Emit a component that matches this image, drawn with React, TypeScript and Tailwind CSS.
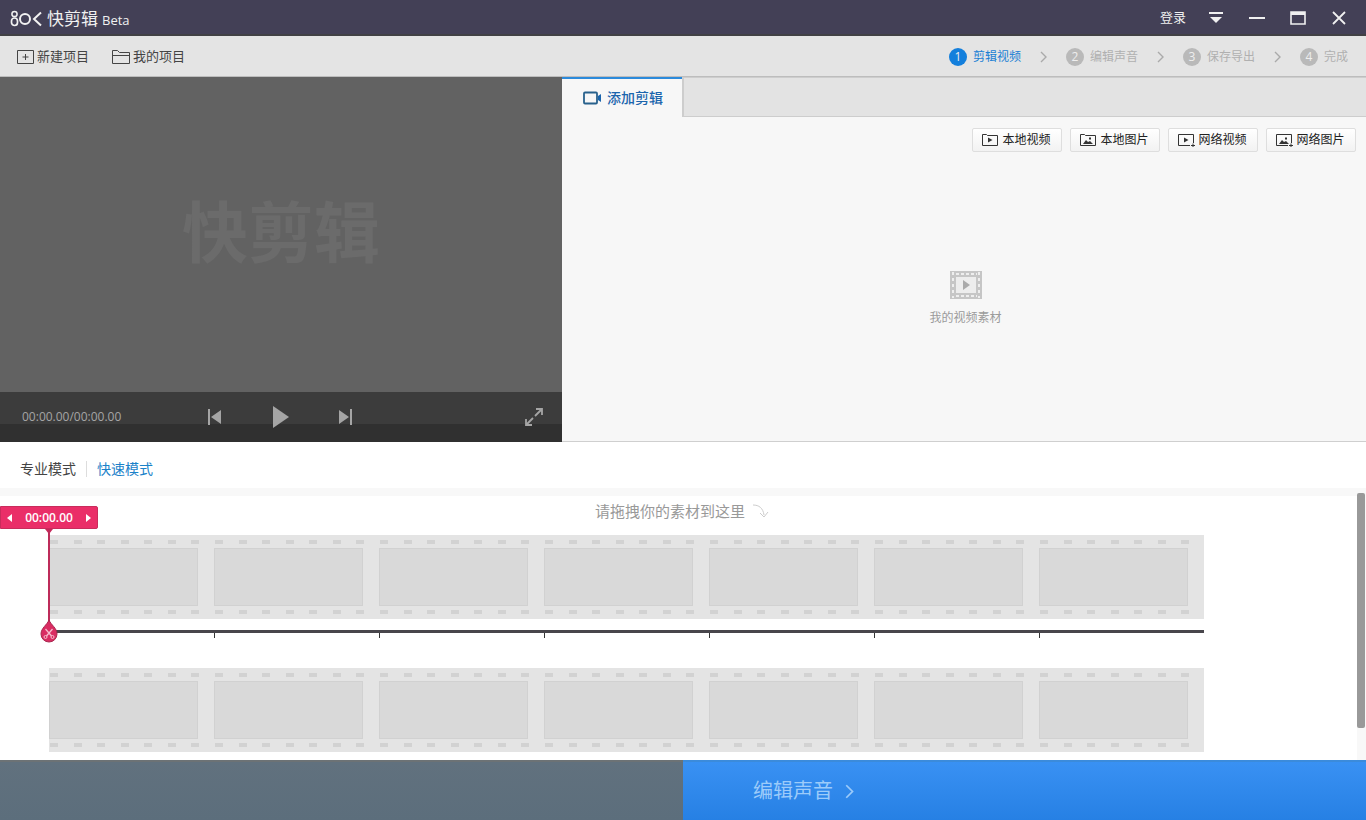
import { useState, type ReactNode } from 'react'
import clsx from 'clsx'

const steps = ['剪辑视频', '编辑声音', '保存导出', '完成']
const frames = [0, 1, 2, 3, 4, 5, 6]

const sources = [
    { label: '本地视频', folder: true, video: true },
    { label: '本地图片', folder: true, video: false },
    { label: '网络视频', folder: false, video: true },
    { label: '网络图片', folder: false, video: false },
]

function Logo() {
    return (
        <svg className="w-8 h-[18px]" viewBox="0 0 32 18" fill="none" stroke="#f2f2f2" strokeWidth="2">
            <circle cx="4.5" cy="4" r="2.6" strokeWidth="1.5" />
            <rect x="1.5" y="8" width="6" height="7.5" rx="3" strokeWidth="1.7" />
            <circle cx="15" cy="9" r="5" />
            <path d="M31 2.5L24 9l7 6.5" />
        </svg>
    )
}

function Chevron({ className }: { className: string }) {
    return (
        <svg className={className} viewBox="0 0 8 12" fill="none" stroke="currentColor" strokeWidth="1.4">
            <path d="M1 1l5 5-5 5" />
        </svg>
    )
}

function SourceIcon({ folder, video }: { folder: boolean; video: boolean }) {
    return (
        <svg className="w-[18px] h-[14px]" viewBox="0 0 18 14" fill="none" stroke="#333">
            {folder ? (
                <path d="M1.5 12.5v-11h4l1 1h10v10z" />
            ) : (
                <path d="M13 12.5H1.5v-11h15V10M14 12.5h4M16 10.5v4" />
            )}
            {video ? (
                <path d="M7 4.5L11.5 7 7 9.5z" fill="#333" stroke="none" />
            ) : (
                <path d="M4 11l3-4 2 2 2-1 3 3zM10 4.5h2v2h-2z" fill="#333" stroke="none" />
            )}
        </svg>
    )
}

function WindowButton({ label, children }: { label: string; children: ReactNode }) {
    return (
        <button type="button" aria-label={label} className="w-[41px] h-9 flex items-center justify-center">
            <svg className="w-4 h-4" viewBox="0 0 16 16" fill="none" stroke="#f0f0f0" strokeWidth="2">
                {children}
            </svg>
        </button>
    )
}

function TitleBar() {
    return (
        <header className="h-9 flex items-center justify-between bg-[#434056] border-b-2 border-[#414144] text-[#f0f0f0]">
            <div className="flex items-center pl-[10px] pt-1">
                <Logo />
                <h1 className="flex items-baseline gap-1 pl-[5px] text-[17px] leading-6">
                    快剪辑 <span className="text-[13px]">Beta</span>
                </h1>
            </div>
            <div className="flex items-center pr-[7px] pt-px">
                <a href="#login" className="text-[13px] pr-[9px]">登录</a>
                <WindowButton label="菜单">
                    <path d="M1 3h14" />
                    <path d="M2 7h12l-6 6z" fill="#f0f0f0" stroke="none" />
                </WindowButton>
                <WindowButton label="最小化">
                    <path d="M0 8h16" />
                </WindowButton>
                <WindowButton label="最大化">
                    <path d="M1 2h14v12H1z" strokeWidth="1.6" />
                    <path d="M1 3.5h14" strokeWidth="3" />
                </WindowButton>
                <WindowButton label="关闭">
                    <path d="M2 2l12 12M14 2L2 14" strokeWidth="1.8" />
                </WindowButton>
            </div>
        </header>
    )
}

function Toolbar() {
    return (
        <nav className="h-[41px] flex items-center justify-between pl-4 pr-[18px] pt-px bg-[#e4e4e4] border-b border-[#bdbdbd]">
            <div className="flex items-center gap-[22px] pt-px text-[13px] text-[#444]">
                <button type="button" className="flex items-center gap-[2px]">
                    <svg className="w-[19px] h-4" viewBox="0 0 19 16" fill="none" stroke="#444">
                        <path d="M1.5 1.5h16v13h-16zM9.5 5v6M6.5 8h6" />
                    </svg>
                    新建项目
                </button>
                <button type="button" className="flex items-center gap-[2px]">
                    <svg className="w-5 h-4" viewBox="0 0 20 16" fill="none" stroke="#444">
                        <path d="M1.5 14.500v-13h5l2 2h10v11zM1.5 6.500h17" />
                    </svg>
                    我的项目
                </button>
            </div>
            <ol className="flex items-center text-xs">
                {steps.map((step, i) => (
                    <li key={step} className={clsx('flex items-center', i === 0 ? 'text-[#1a7fd4]' : 'text-[#b0b0b0]')}>
                        <span
                            className={clsx(
                                'w-[18px] h-[18px] mr-[6px] rounded-full flex items-center justify-center text-[#eee]',
                                i === 0 ? 'bg-[#137fdc]' : 'bg-[#b9b9b9]'
                            )}
                        >
                            {i + 1}
                        </span>
                        {step}
                        {i < steps.length - 1 && <Chevron className="w-2 h-3 ml-[19px] mr-[18px] text-[#aaa]" />}
                    </li>
                ))}
            </ol>
        </nav>
    )
}

function Preview() {
    return (
        <section className="w-[562px] shrink-0 flex flex-col">
            <div className="flex-1 flex items-center justify-center pb-2 bg-[#626262] text-[66px] leading-[66px] font-bold text-[#6b6b6b]">
                快剪辑
            </div>
            <div className="h-[50px] flex items-center justify-between pl-[22px] pr-[18px] bg-linear-to-b from-[#3c3c3c] from-64% to-[#303030] to-64% text-[#a5a5a5]">
                <time className="w-[168px] text-xs">00:00.00/00:00.00</time>
                <div className="flex items-center gap-[50px]">
                    <button type="button" aria-label="上一帧">
                        <svg className="w-4 h-4" viewBox="0 0 16 16" fill="currentColor">
                            <path d="M1 0h2v16H1zM14 1v14L4 8z" />
                        </svg>
                    </button>
                    <button type="button" aria-label="播放">
                        <svg className="w-4 h-[22px]" viewBox="0 0 16 22" fill="currentColor">
                            <path d="M0 0l16 11L0 22z" />
                        </svg>
                    </button>
                    <button type="button" aria-label="下一帧">
                        <svg className="w-4 h-4" viewBox="0 0 16 16" fill="currentColor">
                            <path d="M11 0h2v16h-2zM0 1v14l10-7z" />
                        </svg>
                    </button>
                </div>
                <div className="w-[172px] flex justify-end">
                    <button type="button" aria-label="全屏">
                        <svg className="w-5 h-5" viewBox="0 0 20 20" fill="none" stroke="currentColor" strokeWidth="1.8">
                            <path d="M11 9l6-6M9 11l-6 6M12 2h6v6M2 12v6h6" />
                        </svg>
                    </button>
                </div>
            </div>
        </section>
    )
}

function MediaPanel() {
    return (
        <section className="flex-1 flex flex-col bg-[#f7f7f7] border-b border-[#cfcfcf]">
            <div className="h-10 flex">
                <button
                    type="button"
                    className="w-[120px] flex items-center justify-center gap-[5px] pl-[2px] border-t-2 border-[#2b8adb] text-sm font-medium text-[#1b65ad]"
                >
                    <svg className="w-[19px] h-[14px]" viewBox="0 0 19 14" fill="none" stroke="#28618c" strokeWidth="1.8">
                        <rect x="1" y="1.5" width="13" height="11" rx="1" />
                        <path d="M15 5l3-2v8l-3-2z" fill="#1b65ad" stroke="none" />
                    </svg>
                    添加剪辑
                </button>
                <div className="flex-1 bg-[#e3e3e3] border-l-2 border-y border-[#cdcdcd]" />
            </div>
            <div className="flex justify-end gap-2 pt-[11px] pr-[10px]">
                {sources.map((s) => (
                    <button
                        key={s.label}
                        type="button"
                        className="w-[90px] h-6 flex items-center justify-center gap-[3px] pr-[2px] rounded-xs border border-[#dedede] bg-linear-to-b from-white to-[#f2f2f2] text-xs text-[#222]"
                    >
                        <SourceIcon folder={s.folder} video={s.video} />
                        {s.label}
                    </button>
                ))}
            </div>
            <div className="flex-1 flex flex-col items-center justify-center gap-[10px] pt-[3px] pl-[3px] text-xs text-[#9b9b9b]">
                <svg className="w-[34px] h-[30px]" viewBox="0 0 34 30" fill="none">
                    <path d="M1 1h32v28H1z" fill="#c6c6c6" />
                    <path d="M7 7h20v16H7z" fill="#ededed" />
                    <path d="M7 4h21M7 26h21" stroke="#eee" strokeWidth="2" strokeDasharray="3 2" />
                    <path d="M4 2v26M30 2v26" stroke="#eee" strokeWidth="2" strokeDasharray="3 3" />
                    <path d="M14 10l7 5-7 5z" fill="#aaa" />
                </svg>
                我的视频素材
            </div>
        </section>
    )
}

function Perforation() {
    return (
        <div className="flex justify-between pl-px pr-[15px]">
            {frames.map((n) => (
                <span key={n} className="w-2 h-1 bg-[#d2d2d2]" />
            ))}
        </div>
    )
}

function FilmStrip() {
    return (
        <div className="w-[1155px] h-[84px] flex bg-[#e4e4e4]">
            {frames.map((n) => (
                <div key={n} className="flex-1 flex flex-col justify-between py-[5px]">
                    <Perforation />
                    <div className="h-[58px] mr-4 bg-[#d9d9d9] border border-[#d1d1d1]" />
                    <Perforation />
                </div>
            ))}
        </div>
    )
}

function Playhead() {
    return (
        <div className="absolute left-0 top-[10px] w-[98px] flex flex-col items-center">
            <div className="w-full h-[23px] flex items-center justify-between px-[5px] rounded-r-xs border border-[#c92c5c] bg-[#ea2e68] text-xs leading-5 font-semibold text-white">
                <button type="button" aria-label="后退">
                    <svg className="w-[6px] h-2" viewBox="0 0 6 8" fill="#fff"><path d="M6 0v8L1 4z" /></svg>
                </button>
                00:00.00
                <button type="button" aria-label="前进">
                    <svg className="w-[6px] h-2" viewBox="0 0 6 8" fill="#fff"><path d="M0 0v8l5-4z" /></svg>
                </button>
            </div>
            <svg className="w-[18px] h-[115px]" viewBox="0 0 18 115" fill="none">
                <path d="M5 0h8L9 5z" fill="#c7285a" />
                <path d="M9 0v95" stroke="#bd2b59" strokeWidth="2" />
                <path d="M9 91c2 5 8 8 8 14a8 8 0 0 1-16 0C1 99 7 96 9 91z" fill="#d92c62" stroke="#a92850" />
                <path d="M5.5 100l6 7M12.5 100l-6 7" stroke="#f6bccd" strokeWidth="1.3" />
                <circle cx="5.5" cy="108" r="1.5" stroke="#f6bccd" />
                <circle cx="12.5" cy="108" r="1.5" stroke="#f6bccd" />
            </svg>
        </div>
    )
}

function Timeline() {
    return (
        <section className="flex-1 flex bg-white">
            <div className="relative flex-1 border-t-8 border-[#f8f8f8]">
                <p className="h-[39px] pl-[7px] pt-1 flex justify-center gap-2 text-[15px] leading-[22px] text-[#999]">
                    请拖拽你的素材到这里
                    <svg className="w-4 h-4 mt-1" viewBox="0 0 16 16" fill="none" stroke="#ccc">
                        <path d="M0 1c6 0 10 3 11 10M7 9l4 4 4-5" />
                    </svg>
                </p>
                <div className="pl-[49px]">
                    <FilmStrip />
                    <div className="w-[1155px] h-2 mt-[11px] mb-[30px] flex border-t-3 border-[#48464b]">
                        {frames.map((n) => (
                            <span key={n} className={clsx('w-[165px]', n > 0 && 'border-l border-[#333]')} />
                        ))}
                    </div>
                    <FilmStrip />
                </div>
                <Playhead />
            </div>
            <div className="w-[9px] pt-[5px] pr-px flex flex-col bg-[#f8f8f8]">
                <div className="h-[235px] rounded-xs bg-[#999]" />
            </div>
        </section>
    )
}

export default function App() {
    const [mode, setMode] = useState('快速模式')

    return (
        <div className="min-h-screen flex flex-col bg-white font-['Open_Sans','Noto_Sans_CJK_SC',sans-serif]">
            <TitleBar />
            <Toolbar />
            <main className="flex-1 flex flex-col">
                <div className="h-[365px] flex">
                    <Preview />
                    <MediaPanel />
                </div>
                <div className="h-[46px] flex items-center pl-5 pt-2 text-sm">
                    {['专业模式', '快速模式'].map((name, i) => (
                        <button
                            key={name}
                            type="button"
                            onClick={() => setMode(name)}
                            className={clsx(
                                'leading-4',
                                i > 0 && 'ml-[10px] pl-[10px] border-l border-[#ddd]',
                                mode === name ? 'text-[#1b82c9]' : 'text-[#444]'
                            )}
                        >
                            {name}
                        </button>
                    ))}
                </div>
                <Timeline />
            </main>
            <footer className="h-[60px] flex">
                <div className="w-1/2 border-t-2 border-[#6c7275] bg-linear-to-b from-[#61717e] to-[#5c6e7c]" />
                <button
                    type="button"
                    className="w-1/2 flex items-center gap-3 pl-[70px] border-t-2 border-[#3b8bdb] bg-linear-to-b from-[#3991f3] to-[#2680e4] text-xl text-[#9ccbfa]"
                >
                    编辑声音
                    <Chevron className="w-[10px] h-[15px]" />
                </button>
            </footer>
        </div>
    )
}
